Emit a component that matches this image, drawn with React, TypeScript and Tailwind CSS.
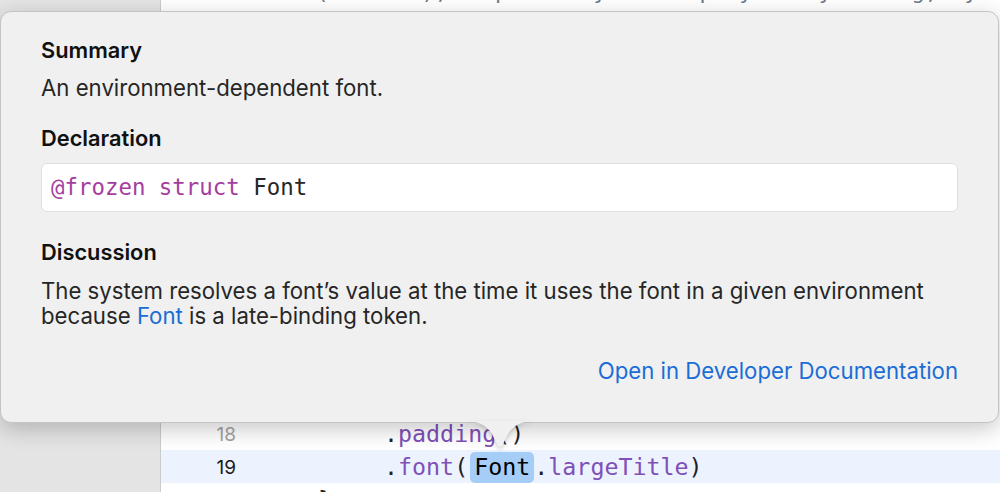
import React from "react";

const MONO = "font-['DejaVu_Sans_Mono',monospace]";

function CodeRow({
  num,
  current = false,
  indent = 148,
  children,
}: {
  num?: string;
  current?: boolean;
  indent?: number;
  children?: React.ReactNode;
}) {
  return (
    <div
      className={`flex h-[33px] shrink-0 items-center ${current ? "bg-[#ecf3fe]" : ""}`}
    >
      <div
        className={`w-[75px] shrink-0 pt-[4px] text-right text-[19px] ${
          current ? "text-[#1c1c1c]" : "text-[#a3a3a3]"
        }`}
      >
        {num}
      </div>
      <div
        className={`flex h-full items-center whitespace-pre pt-[2px] text-[23.3px] text-[#1f1f1f] ${MONO}`}
        style={{ paddingLeft: indent }}
      >
        {children}
      </div>
    </div>
  );
}

export default function App() {
  return (
    <div className="relative h-[492px] w-[1000px] overflow-hidden bg-white font-['Inter',sans-serif]">
      {/* Editor behind the popover */}
      <div className="flex h-full">
        <div className="w-[161px] shrink-0 border-r border-[#cbcbcb] bg-[#e4e4e4]" />
        <div className="flex flex-1 flex-col overflow-hidden">
          <div className="h-[11px] shrink-0">
            <div className="flex h-[3px] items-end overflow-hidden pl-[75px]">
              <span className={`whitespace-pre text-[22px] leading-none text-[#6b7b8c] ${MONO}`}>
                {"  Text(\"Hello\"), a quick way to display every string, my app's copy, by you."}
              </span>
            </div>
          </div>
          <div className="h-[406px] shrink-0" />
          <CodeRow num="18">
            <span>.</span>
            <span className="text-[#804fb8]">padding</span>
            <span>()</span>
          </CodeRow>
          <CodeRow num="19" current>
            <span>.</span>
            <span className="text-[#804fb8]">font</span>
            <span>(</span>
            <span className="ml-[2px] flex h-[31px] items-center rounded-[5px] bg-[#a6cdf7] px-[4px] text-black">
              Font
            </span>
            <span>.</span>
            <span className="text-[#804fb8]">largeTitle</span>
            <span>)</span>
          </CodeRow>
          <CodeRow indent={82}>
            <span>{"}"}</span>
          </CodeRow>
        </div>
      </div>

      {/* Quick help popover */}
      <div className="absolute left-0 top-[11px] h-[412px] w-[999px] rounded-[11px] border border-[#c4c4c4] bg-[#f0f0f0] px-[40px] pt-[25px] shadow-[0_6px_22px_rgba(0,0,0,0.22)]">
        <h2 className="text-[21.8px] font-semibold leading-[26px] text-[#111]">Summary</h2>
        <p className="mt-[12px] text-[22.2px] leading-[26px] text-[#262626]">
          An environment-dependent font.
        </p>

        <h2 className="mt-[24px] text-[21.8px] font-semibold leading-[26px] text-[#111]">
          Declaration
        </h2>
        <div
          className={`mt-[12px] flex h-[49px] items-center rounded-[6px] border border-[#e0e0e0] bg-white px-[9px] text-[22.4px] ${MONO}`}
        >
          <span className="text-[#a53da0]">@frozen struct</span>
          <span className="whitespace-pre text-[#262626]"> Font</span>
        </div>

        <h2 className="mt-[27px] text-[21.8px] font-semibold leading-[26px] text-[#111]">
          Discussion
        </h2>
        <p className="mt-[13px] text-[22.2px] leading-[25px] text-[#262626]">
          The system resolves a font’s value at the time it uses the font in a given environment
          because <span className="text-[#1a6dd6]">Font</span> is a late-binding token.
        </p>

        <div className="mt-[30px] flex justify-end">
          <span className="text-[22.2px] leading-[26px] text-[#1a6dd6]">
            Open in Developer Documentation
          </span>
        </div>
      </div>

      {/* Popover arrow */}
      <svg
        className="absolute left-[465px] top-[421px] drop-shadow-[0_2px_2px_rgba(0,0,0,0.18)]"
        width="70"
        height="28"
        viewBox="0 0 70 28"
      >
        <path
          d="M0 0 C14 0 21 4 27 13 L32.5 24 Q35 28 37.5 24 L43 13 C49 4 56 0 70 0 Z"
          fill="#f0f0f0"
        />
      </svg>
    </div>
  );
}
